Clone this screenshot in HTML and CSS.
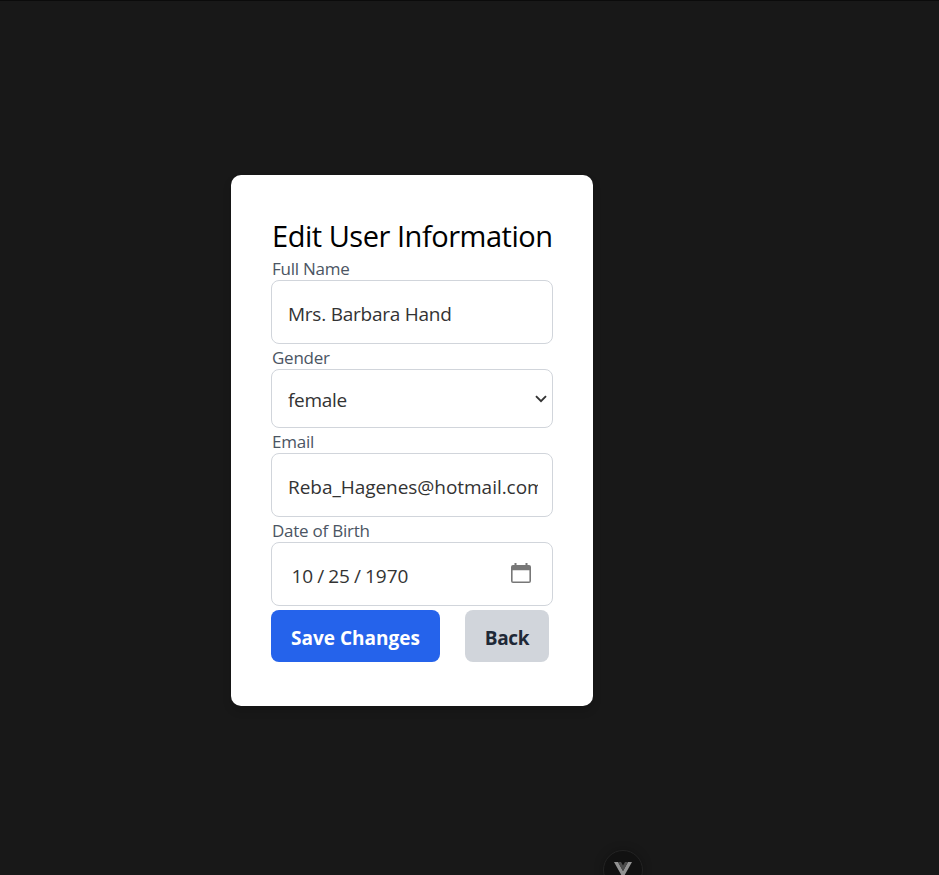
FILE: index.html
```html
<!DOCTYPE html>
<html lang="en">
<head>
<meta charset="utf-8">
<title>Edit User</title>
<link rel="stylesheet" href="styles.css">
</head>
<body>
<main class="card">
  <h1 class="title">Edit User Information</h1>
  <form>
    <label class="label label-name" for="name">Full Name</label>
    <input class="field field-name" id="name" type="text" value="Mrs. Barbara Hand">
    <label class="label label-gender" for="gender">Gender</label>
    <div class="select-wrap">
      <select class="field field-select" id="gender"><option>female</option><option>male</option></select>
      <svg class="chevron" width="12" height="8" viewBox="0 0 12 8"><path d="M1 1.2 6 6.2 11 1.2" fill="none" stroke="#333" stroke-width="1.9"/></svg>
    </div>
    <label class="label label-email" for="email">Email</label>
    <input class="field field-email" id="email" type="text" value="Reba_Hagenes@hotmail.com">
    <div class="label label-date">Date of Birth</div>
    <div class="field field-date">
      <div class="date"><span>10</span><span class="slash">/</span><span>25</span><span class="slash">/</span><span>1970</span></div>
      <svg class="calendar" width="20" height="20" viewBox="0 0 20 20" fill="#777"><path fill-rule="evenodd" d="M2 2H3.500V0H5.500V2H14.500V0H16.500V2H18Q20 2 20 4V18Q20 20 18 20H2Q0 20 0 18V4Q0 2 2 2ZM1.600 7.200V18.400H18.400V7.200Z"/></svg>
    </div>
    <div class="actions">
      <button class="btn save" type="button">Save Changes</button>
      <button class="btn back" type="button">Back</button>
    </div>
  </form>
</main>
<div class="devtools">
  <svg width="18" height="16" viewBox="0 0 18 16"><path d="M0 0H4L9 9 14 0H18L9 16Z" fill="#929292"/><path d="M4 0H7L9 3.500 11 0H14L9 9Z" fill="#4c4c4c"/></svg>
</div>
</body>
</html>
```
FILE: styles.css
```css
* { box-sizing: border-box; }
html { height: 100%; overflow: hidden; background: #181818; }
body {
  position: relative;
  height: 100%;
  margin: 0;
  padding: 174px 0 0 231px;
  overflow: hidden;
  border-top: 1px solid #0b0b0b;
  background: #181818;
  font-family: "Open Sans", "Noto Sans", sans-serif;
}
.card {
  width: 362px;
  height: 531px;
  padding: 40px;
  border-radius: 10px;
  background: #fff;
  box-shadow: 0 5px 8px rgba(0, 0, 0, .15);
}
.title {
  height: 40px;
  margin: 0;
  padding-left: 1px;
  color: #000;
  font-size: 29px;
  font-weight: 400;
  letter-spacing: -.47px;
  line-height: 42px;
  white-space: nowrap;
}
.label {
  display: block;
  height: 25px;
  padding-left: 1px;
  color: #4b5563;
  font-size: 17px;
  letter-spacing: -.25px;
  line-height: 27px;
}
.field {
  display: block;
  width: 282px;
  height: 64px;
  margin: 0;
  padding: 4px 14px 0 16px;
  border: 1px solid #d1d5db;
  border-radius: 8px;
  outline: 0;
  background: #fff;
  color: #333;
  font-family: inherit;
  font-size: 19px;
}
.field-name { letter-spacing: -.24px; }
.select-wrap { position: relative; }
.field-select { height: 59px; padding-top: 2px; letter-spacing: -.3px; appearance: none; }
.chevron { position: absolute; top: 26px; right: 6.500px; }
.field-email { letter-spacing: -.04px; }
.field-date {
  display: flex;
  align-items: center;
  justify-content: space-between;
  padding: 4px 21px 0 20px;
}
.date { display: flex; margin-left: -.5px; }
.slash { padding: 0 4px; }
.calendar { margin-top: -7px; }
.actions { display: flex; gap: 25px; margin-top: 4px; }
.btn {
  height: 52px;
  padding: 4px 0 0;
  border: 0;
  border-radius: 8px;
  font-family: inherit;
  font-size: 19px;
  font-weight: 700;
  white-space: nowrap;
}
.save { width: 169px; background: #2563eb; color: #fff; }
.back { width: 84px; background: #d1d5db; color: #1f2937; letter-spacing: -.3px; }
.devtools {
  position: absolute;
  left: 603px;
  top: 849px;
  display: flex;
  justify-content: center;
  width: 40px;
  height: 40px;
  padding-top: 11px;
  border: 1px solid #232323;
  border-radius: 50%;
  background: #111;
  box-shadow: 0 0 10px rgba(0, 0, 0, .25);
}
```
